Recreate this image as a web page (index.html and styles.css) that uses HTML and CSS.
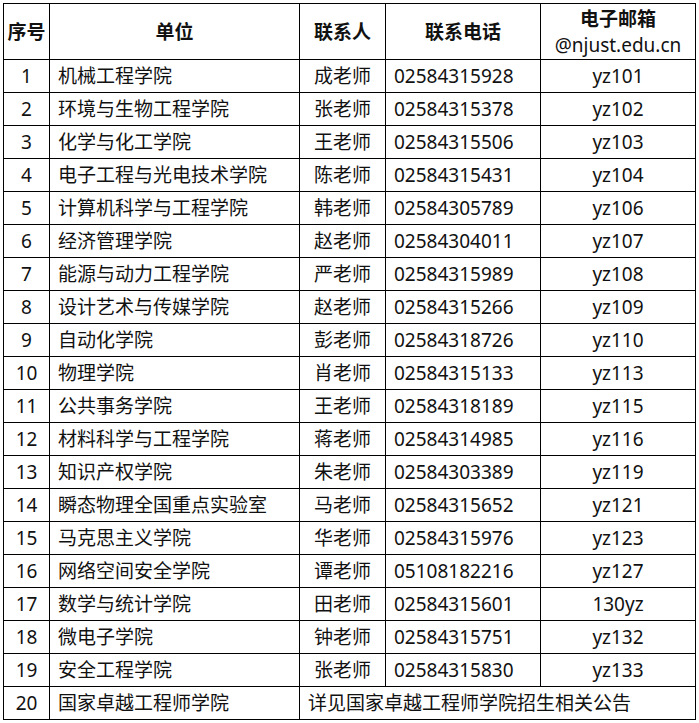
FILE: index.html
```html
<!DOCTYPE html>
<html lang="zh-CN">
<head>
<meta charset="utf-8">
<link rel="stylesheet" href="styles.css">
</head>
<body>
<table class="tbl">
<colgroup>
<col class="c1"><col class="c2"><col class="c3"><col class="c4"><col class="c5">
</colgroup>
<thead>
<tr class="head">
<th>序号</th><th>单位</th><th>联系人</th><th>联系电话</th><th>电子邮箱<br><span class="sub">@njust.edu.cn</span></th>
</tr>
</thead>
<tbody>
<tr><td class="ctr">1</td><td class="lft">机械工程学院</td><td class="ctr">成老师</td><td class="lft">02584315928</td><td class="ctr">yz101</td></tr>
<tr><td class="ctr">2</td><td class="lft">环境与生物工程学院</td><td class="ctr">张老师</td><td class="lft">02584315378</td><td class="ctr">yz102</td></tr>
<tr><td class="ctr">3</td><td class="lft">化学与化工学院</td><td class="ctr">王老师</td><td class="lft">02584315506</td><td class="ctr">yz103</td></tr>
<tr><td class="ctr">4</td><td class="lft">电子工程与光电技术学院</td><td class="ctr">陈老师</td><td class="lft">02584315431</td><td class="ctr">yz104</td></tr>
<tr><td class="ctr">5</td><td class="lft">计算机科学与工程学院</td><td class="ctr">韩老师</td><td class="lft">02584305789</td><td class="ctr">yz106</td></tr>
<tr><td class="ctr">6</td><td class="lft">经济管理学院</td><td class="ctr">赵老师</td><td class="lft">02584304011</td><td class="ctr">yz107</td></tr>
<tr><td class="ctr">7</td><td class="lft">能源与动力工程学院</td><td class="ctr">严老师</td><td class="lft">02584315989</td><td class="ctr">yz108</td></tr>
<tr><td class="ctr">8</td><td class="lft">设计艺术与传媒学院</td><td class="ctr">赵老师</td><td class="lft">02584315266</td><td class="ctr">yz109</td></tr>
<tr><td class="ctr">9</td><td class="lft">自动化学院</td><td class="ctr">彭老师</td><td class="lft">02584318726</td><td class="ctr">yz110</td></tr>
<tr><td class="ctr">10</td><td class="lft">物理学院</td><td class="ctr">肖老师</td><td class="lft">02584315133</td><td class="ctr">yz113</td></tr>
<tr><td class="ctr">11</td><td class="lft">公共事务学院</td><td class="ctr">王老师</td><td class="lft">02584318189</td><td class="ctr">yz115</td></tr>
<tr><td class="ctr">12</td><td class="lft">材料科学与工程学院</td><td class="ctr">蒋老师</td><td class="lft">02584314985</td><td class="ctr">yz116</td></tr>
<tr><td class="ctr">13</td><td class="lft">知识产权学院</td><td class="ctr">朱老师</td><td class="lft">02584303389</td><td class="ctr">yz119</td></tr>
<tr><td class="ctr">14</td><td class="lft">瞬态物理全国重点实验室</td><td class="ctr">马老师</td><td class="lft">02584315652</td><td class="ctr">yz121</td></tr>
<tr><td class="ctr">15</td><td class="lft">马克思主义学院</td><td class="ctr">华老师</td><td class="lft">02584315976</td><td class="ctr">yz123</td></tr>
<tr><td class="ctr">16</td><td class="lft">网络空间安全学院</td><td class="ctr">谭老师</td><td class="lft">05108182216</td><td class="ctr">yz127</td></tr>
<tr><td class="ctr">17</td><td class="lft">数学与统计学院</td><td class="ctr">田老师</td><td class="lft">02584315601</td><td class="ctr">130yz</td></tr>
<tr><td class="ctr">18</td><td class="lft">微电子学院</td><td class="ctr">钟老师</td><td class="lft">02584315751</td><td class="ctr">yz132</td></tr>
<tr><td class="ctr">19</td><td class="lft">安全工程学院</td><td class="ctr">张老师</td><td class="lft">02584315830</td><td class="ctr">yz133</td></tr>
<tr><td class="ctr">20</td><td class="lft">国家卓越工程师学院</td><td class="lft" colspan="3">详见国家卓越工程师学院招生相关公告</td></tr>
</tbody>
</table>
</body>
</html>
```
FILE: styles.css
```css
html, body {
  margin: 0;
  padding: 0;
  background: #fff;
}
body {
  padding: 3px;
  font-family: "Noto Sans", "Noto Sans CJK SC", sans-serif;
  font-size: 19px;
  color: #111;
}
.tbl {
  border-collapse: collapse;
  table-layout: fixed;
  width: 693px;
}
.c1 { width: 46px; }
.c2 { width: 250px; }
.c3 { width: 86px; }
.c4 { width: 155px; }
.c5 { width: 155px; }
.tbl th, .tbl td {
  border: 1px solid #000;
  padding: 0 8px;
  line-height: 26px;
  white-space: nowrap;
  overflow: hidden;
}
.tbl th {
  padding: 0;
  font-weight: bold;
  text-align: center;
}
.head { height: 56px; }
.tbl tbody tr { height: 33px; }
.sub { font-weight: normal; }
.ctr { text-align: center; }
.lft { text-align: left; }
```
